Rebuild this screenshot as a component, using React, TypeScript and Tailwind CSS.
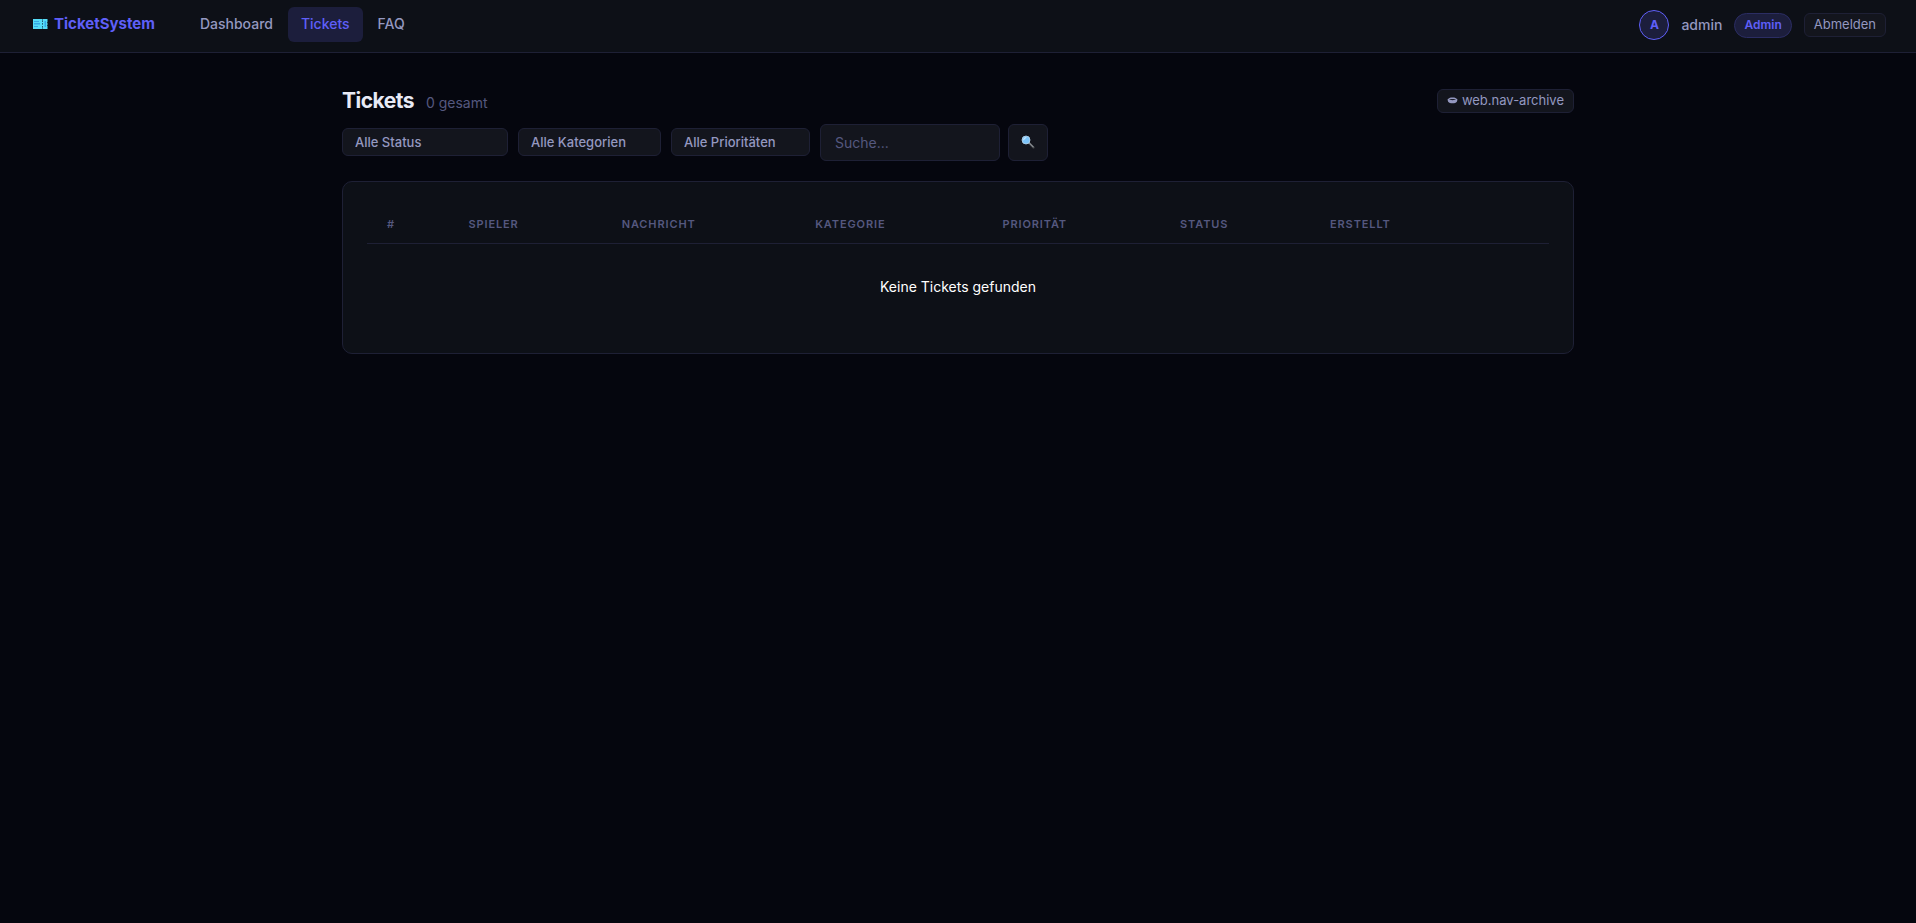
import { useState } from 'react';

const navLinks = ['Dashboard', 'Tickets', 'FAQ'];
const columns = ['#', 'Spieler', 'Nachricht', 'Kategorie', 'Priorität', 'Status', 'Erstellt', ''];

const selectClass =
  'h-7 appearance-none rounded-md border border-[#1e2035] bg-[#13151d] px-3 text-[13px] leading-4 font-medium text-[#9498c0] outline-none';

function TicketIcon() {
  return (
    <svg width="16" height="12" viewBox="0 0 16 12" aria-hidden="true">
      <path d="M1 1h9l.5.8L11 1h4.5v3l-.7.5.7.5v2l-.7.5.7.5v3H11l-.5-.8-.5.8H1z" fill="#55dcf7" />
      <path d="M2 3h5v1H2zM2 5h6v1.5H2zM2 8h4v1H2zM12.5 3H14v6h-1.5z" fill="#35a9e6" />
      <path d="M10 2.5h1v1.2h-1zM10 5.2h1v1.4h-1zM10 8.2h1v1.2h-1z" fill="#123449" />
    </svg>
  );
}

function SearchIcon() {
  return (
    <svg width="14" height="14" viewBox="0 0 14 14" aria-hidden="true">
      <path d="M8 8l4.5 4.5" stroke="#3a3d42" strokeWidth="2.4" strokeLinecap="round" />
      <path d="M8.2 7.8l4 4" stroke="#8f9499" strokeWidth="1.2" strokeLinecap="round" />
      <circle cx="5" cy="5" r="4" fill="#7cc4fa" stroke="#b5d3e8" strokeWidth="0.8" />
      <path d="M2.2 5.8a3 3 0 0 1 3.6-3.6z" fill="#c3e5ff" />
    </svg>
  );
}

function ArchiveIcon() {
  return (
    <svg width="11" height="8" viewBox="0 0 11 8" aria-hidden="true">
      <path d="M0.5 3.5C1.6 2 3 1.4 5.5 1.4s3.9.6 5 2.1l-.6 1.9C8.8 6.8 7.6 7.3 5.5 7.3S2.2 6.8 1.1 5.4z" fill="#9498c0" />
      <path d="M2.2 3.6C3 2.8 8 2.8 8.8 3.6 8 4.4 3 4.4 2.2 3.6z" fill="#1b1d2b" />
    </svg>
  );
}

export default function App() {
  const [search, setSearch] = useState('');

  return (
    <div className="min-h-screen bg-[#05060e] font-[Inter,sans-serif] text-sm text-[#e8eaf6]">
      <header className="flex h-[53px] items-center border-b border-[#1e2035] bg-[#0d1017] px-[30px]">
        <a href="#" className="flex items-center gap-1.5 pl-0.5 pb-1 text-[15px] leading-5 font-bold text-[#5f5ff8]">
          <TicketIcon />
          TicketSystem
        </a>
        <nav className="ml-8 flex gap-0.5 pb-1">
          {navLinks.map((link) => (
            <a
              key={link}
              href="#"
              className={`rounded-md px-[13px] pt-1.5 pb-2 text-sm leading-[21px] font-medium ${
                link === 'Tickets' ? 'bg-[#1c1e3c] text-[#5f5ff8]' : 'text-[#9498c0]'
              }`}
            >
              {link}
            </a>
          ))}
        </nav>
        <div className="ml-auto flex items-center gap-3 pb-0.5">
          <span className="flex size-[30px] items-center justify-center rounded-full border border-[#5f5ff8] bg-[#1c1e3c] text-xs font-bold text-[#5f5ff8]">
            A
          </span>
          <span className="font-medium text-[#9498c0]">admin</span>
          <span className="flex h-[25px] items-center rounded-full border border-[#2b2d63] bg-[#1c1e3c] px-[9px] text-xs font-semibold text-[#5f5ff8]">
            Admin
          </span>
          <button className="h-6 rounded-md border border-[#1e2035] bg-[#13151d] px-[9px] pb-0.5 text-[13px] leading-5 text-[#9498c0]">
            Abmelden
          </button>
        </div>
      </header>

      <main className="mx-auto max-w-[1280px] px-6 pt-[30px]">
        <div className="flex h-9 items-center justify-between">
          <div className="flex items-baseline gap-3">
            <h1 className="text-[21px] leading-8 font-bold tracking-tight">Tickets</h1>
            <span className="text-[#55587f]">0 gesamt</span>
          </div>
          <button className="flex h-6 items-center gap-1 rounded-md border border-[#1e2035] bg-[#13151d] px-[9px] pb-0.5 text-[13px] leading-5 text-[#9498c0]">
            <ArchiveIcon />
            web.nav-archive
          </button>
        </div>

        <form className="mt-[5px] flex items-center gap-2.5" onSubmit={(e) => e.preventDefault()}>
          <div className="flex gap-2.5 pb-0.5">
            <select aria-label="Status" className={`${selectClass} w-[166px]`}>
              <option>Alle Status</option>
            </select>
            <select aria-label="Kategorie" className={`${selectClass} w-[143px]`}>
              <option>Alle Kategorien</option>
            </select>
            <select aria-label="Priorität" className={`${selectClass} w-[139px]`}>
              <option>Alle Prioritäten</option>
            </select>
          </div>
          <div className="flex gap-2">
            <input
              type="text"
              aria-label="Suche"
              placeholder="Suche..."
              value={search}
              onChange={(e) => setSearch(e.target.value)}
              className="h-[37px] w-[180px] rounded-md border border-[#1e2035] bg-[#13151d] px-3.5 text-sm outline-none placeholder:text-[#55587f]"
            />
            <button
              aria-label="Suchen"
              className="flex h-[37px] w-10 items-center justify-center rounded-md border border-[#1e2035] bg-[#13151d] pb-0.5"
            >
              <SearchIcon />
            </button>
          </div>
        </form>

        <div className="mt-5 rounded-[10px] border border-[#1e2035] bg-[#0d1017] p-6">
          <table className="w-full">
            <thead>
              <tr className="border-b border-[#1e2035]">
                {columns.map((col) => (
                  <th
                    key={col}
                    className="h-[37px] px-5 text-left text-[11px] leading-4 font-semibold tracking-[0.08em] text-[#55587f] uppercase"
                  >
                    {col}
                  </th>
                ))}
              </tr>
            </thead>
            <tbody>
              <tr>
                <td colSpan={8} className="px-5 py-8 text-center text-sm leading-[21px] text-white">
                  Keine Tickets gefunden
                </td>
              </tr>
            </tbody>
          </table>
        </div>
      </main>
    </div>
  );
}
